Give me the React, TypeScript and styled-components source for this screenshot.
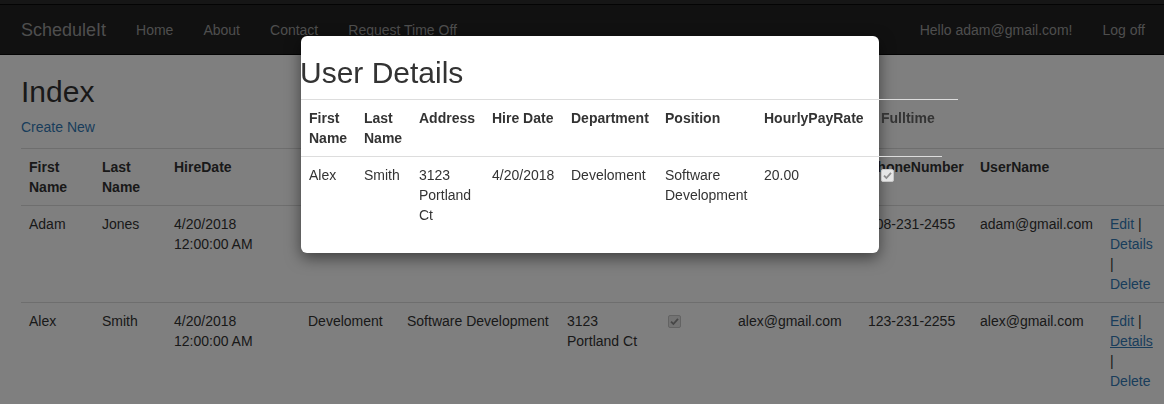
import React from 'react';
import styled, { createGlobalStyle } from 'styled-components';

const GlobalStyle = createGlobalStyle`
  html, body {
    margin: 0;
    padding: 0;
  }
  body {
    font-family: "Liberation Sans", Arial, sans-serif;
    font-size: 14px;
    line-height: 1.42857;
    color: #333;
    background: #fff;
    width: 1164px;
    height: 404px;
    overflow: hidden;
  }
`;

const employees = [
    {
        id: 0,
        first: 'Adam',
        last: 'Jones',
        hired: '4/20/2018 12:00:00 AM',
        department: 'Management',
        position: 'Manager',
        address: '1234 Main St',
        email: 'adam@gmail.com',
        phone: '208-231-2455',
        user: 'adam@gmail.com',
        hover: false,
    },
    {
        id: 1,
        first: 'Alex',
        last: 'Smith',
        hired: '4/20/2018 12:00:00 AM',
        department: 'Develoment',
        position: 'Software Development',
        address: '3123 Portland Ct',
        email: 'alex@gmail.com',
        phone: '123-231-2255',
        user: 'alex@gmail.com',
        hover: true,
    },
];

const columns = [
    { label: 'First Name', width: 73 },
    { label: 'Last Name', width: 72 },
    { label: 'HireDate', width: 134 },
    { label: 'Department', width: 99 },
    { label: 'Position', width: 160 },
    { label: 'Address', width: 101 },
    { label: 'Fulltime', width: 70 },
    { label: 'Email', width: 130 },
    { label: 'PhoneNumber', width: 112 },
    { label: 'UserName', width: 130 },
    { label: '', width: 62 },
];

// the details table is wider than its dialog and runs out past the right edge
const detailColumns = [
    { label: 'First Name', width: 55 },
    { label: 'Last Name', width: 55 },
    { label: 'Address', width: 73 },
    { label: 'Hire Date', width: 79 },
    { label: 'Department', width: 94 },
    { label: 'Position', width: 99 },
    { label: 'HourlyPayRate', width: 117 },
    { label: 'Fulltime', width: 69 },
    { label: '', width: 16 },
];

const Navbar = styled.nav`
    background: #222;
    border-top: 4px solid #2c2c2c;
`;

const NavInner = styled.div`
    display: flex;
    align-items: center;
    height: 49px;
    padding: 0 4px 0 6px;
    border-top: 1px solid #080808;
    border-bottom: 1px solid #080808;
`;

const Brand = styled.a`
    font-size: 18px;
    line-height: 20px;
    padding: 0 15px;
    color: #9d9d9d;
    text-decoration: none;
`;

const NavLink = styled.a`
    padding: 0 15px;
    line-height: 20px;
    color: #9d9d9d;
    text-decoration: none;
`;

const Spacer = styled.div`
    flex: 1;
`;

const Body = styled.div`
    padding-left: 21px;
`;

const Heading = styled.h2`
    font-size: 30px;
    font-weight: normal;
    line-height: 1.1;
    margin: 20px 0 10px;
`;

const Para = styled.p`
    margin: 0 0 10px;
`;

const Link = styled.a<{ $hover?: boolean }>`
    color: #337ab7;
    text-decoration: ${(p) => (p.$hover ? 'underline' : 'none')};
    cursor: pointer;
`;

const Table = styled.table<{ $width: number }>`
    width: ${(p) => p.$width}px;
    table-layout: fixed;
    border-collapse: collapse;
    border-spacing: 0;
    margin-bottom: 20px;
`;

const Col = styled.col<{ $w: number }>`
    width: ${(p) => p.$w}px;
`;

const Th = styled.th`
    padding: 8px;
    text-align: left;
    vertical-align: top;
    font-weight: bold;
    line-height: 20px;
    border-top: 1px solid #ddd;
`;

const Td = styled.td`
    padding: 8px;
    vertical-align: top;
    line-height: 20px;
    border-top: 1px solid #ddd;
`;

const CheckBox = styled.span`
    display: block;
    box-sizing: border-box;
    width: 13px;
    height: 13px;
    margin-top: 4px;
    border: 1px solid #c6c6c6;
    border-radius: 2px;
    background: #e6e6e6;

    svg {
        display: block;
    }
`;

const Backdrop = styled.div`
    position: fixed;
    inset: 0;
    background: rgba(0, 0, 0, 0.5);
`;

const Modal = styled.div`
    position: absolute;
    left: 301px;
    top: 36px;
    width: 578px;
    background: #fff;
    border-radius: 6px;
    box-shadow: 0 5px 15px rgba(0, 0, 0, 0.5);
`;

const ModalTitle = styled(Heading)`
    margin: 20px 0 10px -1px;
`;

const sum = (cols: { width: number }[]) => cols.reduce((n, c) => n + c.width, 0);

function Check() {
    return (
        <CheckBox>
            <svg width="11" height="11" viewBox="0 0 11 11">
                <path d="M2 5.6 L4.4 8 L9 2.8" fill="none" stroke="#8f8f8f" strokeWidth="1.8" />
            </svg>
        </CheckBox>
    );
}

function Actions({ hover }: { hover: boolean }) {
    return (
        <>
            <Link>Edit</Link> | <Link $hover={hover}>Details</Link> | <Link>Delete</Link>
        </>
    );
}

function UserDetails() {
    const alex = employees[1];
    return (
        <Modal>
            <ModalTitle>User Details</ModalTitle>
            <Table $width={sum(detailColumns)}>
                <colgroup>
                    {detailColumns.map((c) => (
                        <Col key={c.label} $w={c.width} />
                    ))}
                </colgroup>
                <tbody>
                    <tr>
                        {detailColumns.map((c) => (
                            <Th key={c.label}>{c.label}</Th>
                        ))}
                    </tr>
                    <tr>
                        <Td>{alex.first}</Td>
                        <Td>{alex.last}</Td>
                        <Td>{alex.address}</Td>
                        <Td>4/20/2018</Td>
                        <Td>{alex.department}</Td>
                        <Td>{alex.position}</Td>
                        <Td>20.00</Td>
                        <Td><Check /></Td>
                    </tr>
                </tbody>
            </Table>
        </Modal>
    );
}

export default function App() {
    return (
        <>
            <GlobalStyle />
            <Navbar>
                <NavInner>
                    <Brand>ScheduleIt</Brand>
                    <NavLink>Home</NavLink>
                    <NavLink>About</NavLink>
                    <NavLink>Contact</NavLink>
                    <NavLink>Request Time Off</NavLink>
                    <Spacer />
                    <NavLink>Hello adam@gmail.com!</NavLink>
                    <NavLink>Log off</NavLink>
                </NavInner>
            </Navbar>
            <Body>
                <Heading>Index</Heading>
                <Para>
                    <Link>Create New</Link>
                </Para>
                <Table $width={sum(columns)}>
                    <colgroup>
                        {columns.map((c) => (
                            <Col key={c.label} $w={c.width} />
                        ))}
                    </colgroup>
                    <tbody>
                        <tr>
                            {columns.map((c) => (
                                <Th key={c.label}>{c.label}</Th>
                            ))}
                        </tr>
                        {employees.map((e) => (
                            <tr key={e.id}>
                                <Td>{e.first}</Td>
                                <Td>{e.last}</Td>
                                <Td>{e.hired}</Td>
                                <Td>{e.department}</Td>
                                <Td>{e.position}</Td>
                                <Td>{e.address}</Td>
                                <Td><Check /></Td>
                                <Td>{e.email}</Td>
                                <Td>{e.phone}</Td>
                                <Td>{e.user}</Td>
                                <Td><Actions hover={e.hover} /></Td>
                            </tr>
                        ))}
                    </tbody>
                </Table>
            </Body>
            <Backdrop />
            <UserDetails />
        </>
    );
}
